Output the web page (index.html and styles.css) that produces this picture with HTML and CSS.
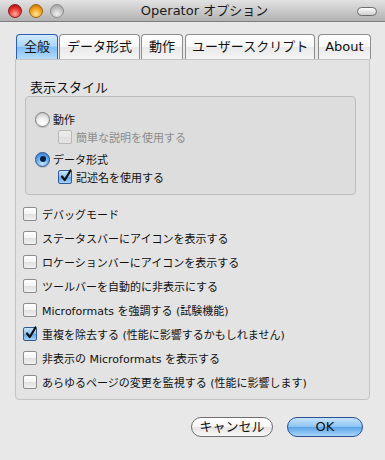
FILE: index.html
```html
<!DOCTYPE html>
<html lang="ja">
<head>
<meta charset="utf-8">
<title>Operator オプション</title>
<link rel="stylesheet" href="styles.css">
</head>
<body>
<div class="window">
  <div class="titlebar">
    <div class="lights">
      <span class="light red"></span>
      <span class="light orange"></span>
      <span class="light gray"></span>
    </div>
    <div class="title">Operator オプション</div>
    <span class="pill"></span>
  </div>
  <div class="tabs">
    <div class="tab active">全般</div>
    <div class="tab">データ形式</div>
    <div class="tab">動作</div>
    <div class="tab narrow">ユーザースクリプト</div>
    <div class="tab about">About</div>
  </div>
  <div class="panel">
    <div class="group-label">表示スタイル</div>
    <div class="group">
      <div class="row"><span class="radio"></span><span>動作</span></div>
      <div class="row sub disabled"><span class="check"></span><span>簡単な説明を使用する</span></div>
      <div class="row second"><span class="radio on"><span class="dot"></span></span><span>データ形式</span></div>
      <div class="row sub"><span class="check on"><svg viewBox="0 0 14 14" width="14" height="14"><path d="M3 7.5 L5.8 11 L11.5 1.5" fill="none" stroke="#111" stroke-width="2.2" stroke-linecap="round" stroke-linejoin="round"/></svg></span><span>記述名を使用する</span></div>
    </div>
    <div class="list">
      <div class="item"><span class="check"></span><span>デバッグモード</span></div>
      <div class="item"><span class="check"></span><span>ステータスバーにアイコンを表示する</span></div>
      <div class="item"><span class="check"></span><span>ロケーションバーにアイコンを表示する</span></div>
      <div class="item"><span class="check"></span><span>ツールバーを自動的に非表示にする</span></div>
      <div class="item"><span class="check"></span><span>Microformats を強調する (試験機能)</span></div>
      <div class="item"><span class="check on"><svg viewBox="0 0 14 14" width="14" height="14"><path d="M3 7.5 L5.8 11 L11.5 1.5" fill="none" stroke="#111" stroke-width="2.2" stroke-linecap="round" stroke-linejoin="round"/></svg></span><span>重複を除去する (性能に影響するかもしれません)</span></div>
      <div class="item"><span class="check"></span><span>非表示の Microformats を表示する</span></div>
      <div class="item"><span class="check"></span><span>あらゆるページの変更を監視する (性能に影響します)</span></div>
    </div>
  </div>
  <div class="buttons">
    <div class="btn">キャンセル</div>
    <div class="btn primary">OK</div>
  </div>
</div>
</body>
</html>
```
FILE: styles.css
```css
* { box-sizing: border-box; }
html, body { margin: 0; padding: 0; }
body {
  width: 385px;
  height: 460px;
  background: #e8e8e8;
  font-family: "DejaVu Sans", "Noto Sans CJK JP", sans-serif;
  color: #111;
  overflow: hidden;
}
.window { width: 385px; height: 460px; background: #e8e8e8; }

.titlebar {
  height: 22px;
  background: linear-gradient(#e2e2e2, #b2b2b2);
  border-bottom: 1px solid #7d7d7d;
  display: flex;
  align-items: center;
  position: relative;
}
.lights { display: flex; gap: 7px; padding-left: 8px; padding-top: 1px; }
.light {
  width: 14px; height: 14px; border-radius: 50%;
  display: block;
}
.light.red {
  background: radial-gradient(circle at 50% 75%, #ffb0a0 0%, #f0403a 45%, #b40d0d 85%);
  border: 1px solid #8a1e1e;
}
.light.orange {
  background: radial-gradient(circle at 50% 75%, #ffe9a0 0%, #f6aa2a 45%, #c8780a 85%);
  border: 1px solid #9a6616;
}
.light.gray {
  background: radial-gradient(circle at 50% 75%, #f0f0f0 0%, #c8c8c8 45%, #a2a2a2 85%);
  border: 1px solid #8c8c8c;
}
.title {
  flex: 1;
  text-align: center;
  font-size: 13px;
  line-height: 16px;
  padding-right: 40px;
  color: #1a1a1a;
}
.pill {
  position: absolute;
  right: 8px; top: 7px;
  width: 20px; height: 9px;
  border-radius: 5px;
  border: 1px solid #6d6d6d;
  background: linear-gradient(#fdfdfd, #cfcfcf);
}

.tabs {
  display: flex;
  gap: 1px;
  padding-left: 16px;
  margin-top: 12px;
  height: 25px;
}
.tab {
  height: 25px;
  padding: 0 7px;
  border: 1px solid #8d8d8d;
  border-bottom: none;
  border-radius: 4px 4px 0 0;
  background: linear-gradient(#ffffff, #f7f7f7 50%, #e9e9e9 51%, #f4f4f4);
  font-size: 13px;
  line-height: 23px;
  color: #111;
  white-space: nowrap;
}
.tab.narrow { padding: 0 6px; margin-left: 1px; }
.tab.about { margin-left: 2px; padding: 0 6px; }
.tab.active {
  border-color: #2d5eb4;
  background: linear-gradient(#d3ebfd, #a6d2f8 50%, #80bff4 51%, #b6dcfa);
}

.panel {
  margin: 0 15px;
  height: 341px;
  border: 1px solid #c4c4c4;
  border-radius: 0 0 4px 4px;
  background: #e3e3e3;
  padding-top: 19px;
}
.group-label {
  font-size: 13px;
  line-height: 17px;
  padding-left: 14px;
  height: 17px;
}
.group {
  margin: 0 13px 0 9px;
  border: 1px solid #bdbdbd;
  border-radius: 4px;
  background: #dddddd;
  padding: 13px 0 8px 9px;
  height: 99px;
}
.row {
  display: flex;
  align-items: center;
  height: 18px;
  font-size: 11px;
  gap: 3px;
}
.row.sub { padding-left: 23px; gap: 4px; }
.row.second { margin-top: 4px; }
.row.disabled { color: #8c8c8c; }
.row.disabled .check { opacity: 0.45; }

.radio {
  width: 15px; height: 15px;
  border-radius: 50%;
  border: 1px solid #7e7e7e;
  background: radial-gradient(circle at 50% 80%, #ffffff 0%, #f2f2f2 40%, #c6c6c6 90%);
  box-shadow: 0 1px 1px rgba(0,0,0,0.15);
  display: flex; align-items: center; justify-content: center;
  flex: none;
}
.radio.on {
  border-color: #2a4f8f;
  background: radial-gradient(circle at 50% 80%, #c6e5ff 0%, #6cb3f2 45%, #2f78cf 95%);
}
.radio .dot {
  width: 6px; height: 6px; border-radius: 50%;
  background: #0c1f40;
}
.check {
  width: 14px; height: 14px;
  border-radius: 2px;
  border: 1px solid #8c8c8c;
  background: linear-gradient(#ffffff, #f4f4f4 50%, #e2e2e2 51%, #f0f0f0);
  flex: none;
  position: relative;
}
.check.on {
  border-color: #345a95;
  background: linear-gradient(#c9e4fb, #8cc3f2 50%, #5fa6ea 51%, #a7d3f8);
}
.check svg { position: absolute; left: 0; top: -2px; overflow: visible; }

.list {
  margin-top: 7px;
  padding-left: 7px;
}
.item {
  display: flex;
  align-items: center;
  gap: 5px;
  height: 24px;
  font-size: 11px;
}

.buttons {
  display: flex;
  justify-content: flex-end;
  gap: 14px;
  margin-top: 17px;
  padding-right: 22px;
}
.btn {
  height: 20px;
  width: 82px;
  border-radius: 10px;
  border: 1px solid #6e6e6e;
  background: linear-gradient(#ffffff, #f6f6f6 50%, #e4e4e4 51%, #f8f8f8);
  font-size: 13px;
  line-height: 18px;
  text-align: center;
}
.btn.primary {
  width: 76px;
  border-color: #2a4f8f;
  background: linear-gradient(#c7e3fb, #8cc3f2 50%, #5aa2e8 51%, #a9d6fa);
}
```
